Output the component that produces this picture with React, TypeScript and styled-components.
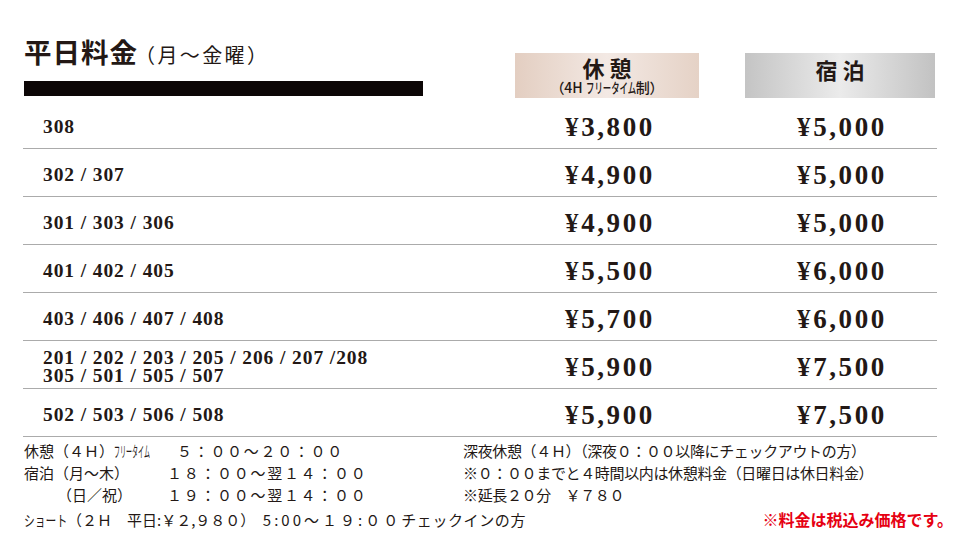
import React from 'react';
import styled, { createGlobalStyle } from 'styled-components';

const GlobalStyle = createGlobalStyle`
  body {
    margin: 0;
    padding: 0;
    background: #fff;
  }
`;

// 料金表の列幅（部屋 / 休憩 / 空き / 宿泊）
const COLS = '492px 184px 46px 190px';
const INK = '#231815';

const Page = styled.div`
  width: 960px;
  height: 540px;
  overflow: hidden;
  box-sizing: border-box;
  padding: 0 23px;
  font-family: "Noto Sans CJK JP", "Noto Sans", sans-serif;
  color: ${INK};
`;

const Head = styled.div`
  display: grid;
  grid-template-columns: ${COLS};
  height: 101px;
`;

const TitleBlock = styled.div`
  grid-column: 1;
  padding-top: 34px;
  padding-left: 1px;
`;

const Title = styled.h1`
  margin: 0;
  font-size: 27.5px;
  font-weight: 700;
  line-height: 34px;
  letter-spacing: 1px;
  white-space: nowrap;
`;

const TitleSub = styled.span`
  font-size: 20px;
  font-weight: 400;
  letter-spacing: 2.4px;
  margin-left: -3px;
`;

const Bar = styled.div`
  width: 399px;
  height: 15px;
  margin-top: 9px;
  background: #0c0606;
`;

const HeadBox = styled.div<{ $tone: 'rest' | 'stay' }>`
  grid-column: ${(p) => (p.$tone === 'rest' ? 2 : 4)};
  margin-top: 53px;
  height: 45px;
  display: flex;
  flex-direction: column;
  align-items: center;
  padding-top: ${(p) => (p.$tone === 'rest' ? '2px' : '4px')};
  box-sizing: border-box;
  background: ${(p) =>
    p.$tone === 'rest'
      ? 'linear-gradient(90deg, #e3cec1 0%, #f3e9e4 50%, #e5d2c6 100%)'
      : 'linear-gradient(90deg, #c4c4c4 0%, #ebebeb 50%, #c2c2c2 100%)'};
`;

const HeadLabel = styled.div`
  font-size: 22px;
  font-weight: 700;
  line-height: 24px;
  letter-spacing: 5px;
  margin-right: -5px;
`;

const HeadNote = styled.div`
  font-size: 14px;
  font-weight: 500;
  line-height: 16px;
  white-space: nowrap;
`;

const Row = styled.div`
  display: grid;
  grid-template-columns: ${COLS};
  align-items: center;
  height: 48px;
  box-sizing: border-box;
  padding-top: 5px;
  border-bottom: 1px solid #ababab;
`;

const Rooms = styled.div`
  grid-column: 1;
  padding-left: 20px;
  font-family: "Liberation Serif", "DejaVu Serif", serif;
  font-weight: 700;
  font-size: 19.5px;
  line-height: 18.5px;
  letter-spacing: 0.9px;
  white-space: nowrap;
`;

const Price = styled.div<{ $col: number }>`
  grid-column: ${(p) => p.$col};
  text-align: center;
  padding-left: ${(p) => (p.$col === 2 ? '6px' : '4px')};
  font-family: "Liberation Serif", "DejaVu Serif", serif;
  font-weight: 700;
  font-size: 27px;
  line-height: 30px;
  letter-spacing: 2.6px;
  white-space: nowrap;
`;

const Foot = styled.div`
  display: grid;
  grid-template-columns: 439px 1fr;
  padding-top: 3px;
  padding-left: 1px;
  font-size: 15px;
  line-height: 22px;
  white-space: nowrap;
`;

const Lines = styled.div`
  display: flex;
  flex-direction: column;
`;

const Line = styled.div`
  display: flex;
  align-items: baseline;
`;

const Label = styled.span<{ $w: number; $pad?: number }>`
  display: inline-block;
  width: ${(p) => p.$w}px;
  padding-left: ${(p) => p.$pad ?? 0}px;
  box-sizing: border-box;
`;

// 長体のカナ（横幅だけ詰める）
const Condensed = styled.span<{ $scale: number; $trim: number }>`
  display: inline-block;
  transform: scaleX(${(p) => p.$scale});
  transform-origin: left center;
  margin-right: -${(p) => p.$trim}px;
  letter-spacing: 0;
`;

const Time = styled.span<{ $gap?: number }>`
  letter-spacing: ${(p) => p.$gap ?? 1.7}px;
`;

const RightLine = styled.div`
  letter-spacing: -0.35px;
`;

const LastRow = styled.div`
  grid-column: 1 / -1;
  display: flex;
  justify-content: space-between;
  align-items: baseline;
  margin-right: -16px;
`;

const Note = styled.span`
  color: #e60012;
  font-weight: 700;
  font-size: 16px;
  padding-top: 2px;
`;

type Plan = { rooms: string[]; rest: string; stay: string };

const plans: Plan[] = [
  { rooms: ['308'], rest: '¥3,800', stay: '¥5,000' },
  { rooms: ['302 / 307'], rest: '¥4,900', stay: '¥5,000' },
  { rooms: ['301 / 303 / 306'], rest: '¥4,900', stay: '¥5,000' },
  { rooms: ['401 / 402 / 405'], rest: '¥5,500', stay: '¥6,000' },
  { rooms: ['403 / 406 / 407 / 408'], rest: '¥5,700', stay: '¥6,000' },
  { rooms: ['201 / 202 / 203 / 205 / 206 / 207 /208', '305 / 501 / 505 / 507'], rest: '¥5,900', stay: '¥7,500' },
  { rooms: ['502 / 503 / 506 / 508'], rest: '¥5,900', stay: '¥7,500' },
];

const App = () => {
  return (
    <>
      <GlobalStyle />
      <Page>
        <Head>
          <TitleBlock>
            <Title>
              平日料金<TitleSub>（月〜金曜）</TitleSub>
            </Title>
            <Bar />
          </TitleBlock>
          <HeadBox $tone="rest">
            <HeadLabel>休憩</HeadLabel>
            <HeadNote>
              （4H <Condensed $scale={0.6} $trim={34}>フリータイム</Condensed>制）
            </HeadNote>
          </HeadBox>
          <HeadBox $tone="stay">
            <HeadLabel>宿泊</HeadLabel>
          </HeadBox>
        </Head>

        {plans.map((p, i) => (
          <Row key={i}>
            <Rooms>
              {p.rooms.map((r) => (
                <div key={r}>{r}</div>
              ))}
            </Rooms>
            <Price $col={2}>{p.rest}</Price>
            <Price $col={4}>{p.stay}</Price>
          </Row>
        ))}

        <Foot>
          <Lines>
            <Line>
              <Label $w={153}>
                休憩（４Ｈ）<Condensed $scale={0.4} $trim={54}>フリータイム</Condensed>
              </Label>
              <Time>５：００〜２０：００</Time>
            </Line>
            <Line>
              <Label $w={143}>宿泊（月〜木）</Label>
              <Time>１８：００〜翌１４：００</Time>
            </Line>
            <Line>
              <Label $w={143} $pad={33}>（日／祝）</Label>
              <Time>１９：００〜翌１４：００</Time>
            </Line>
          </Lines>
          <Lines>
            <RightLine>深夜休憩（４Ｈ）（深夜０：００以降にチェックアウトの方）</RightLine>
            <RightLine>※０：００までと４時間以内は休憩料金（日曜日は休日料金）</RightLine>
            <RightLine>※延長２０分　￥７８０</RightLine>
          </Lines>
          <LastRow>
            <span>
              <Condensed $scale={0.72} $trim={17}>ショート</Condensed>
              {'（２Ｈ　平日:￥２,９８０）　'}
              <Time $gap={3}>5:00〜１９:００</Time>
              <Time $gap={0.6}>チェックインの方</Time>
            </span>
            <Note>※料金は税込み価格です。</Note>
          </LastRow>
        </Foot>
      </Page>
    </>
  );
};

export default App;
